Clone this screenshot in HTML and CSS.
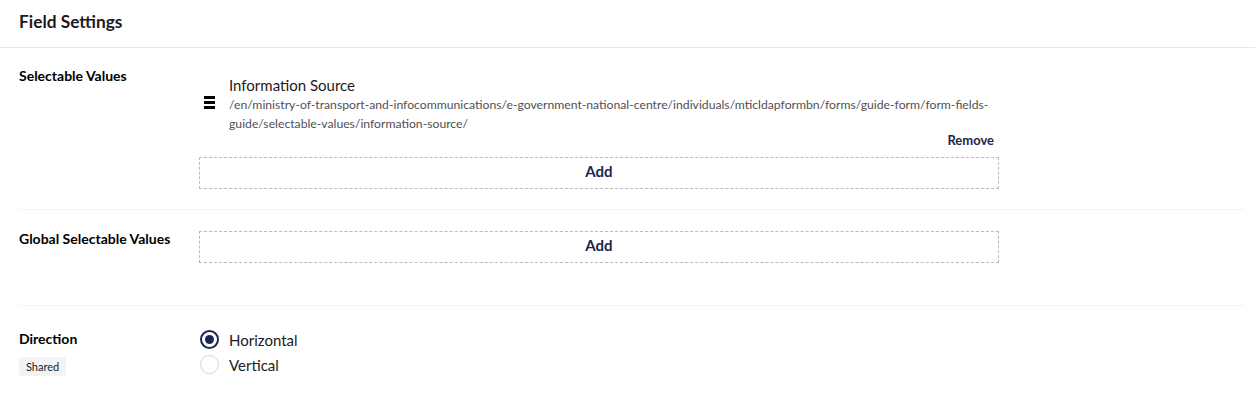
FILE: index.html
```html
<!DOCTYPE html>
<html lang="en">
<head>
<meta charset="utf-8">
<title>Field Settings</title>
<link rel="stylesheet" href="styles.css">
</head>
<body>
<div class="panel">
  <header class="panel-header">
    <h2 class="panel-title">Field Settings</h2>
  </header>
  <div class="panel-body">
    <div class="prop prop-first">
      <div class="prop-label">
        <span class="label-text">Selectable Values</span>
      </div>
      <div class="prop-editor">
        <div class="picked-item">
          <span class="drag-handle" aria-hidden="true">
            <svg width="11" height="15" viewBox="0 0 11 15"><rect x="0" y="1" width="11" height="3" fill="#000"/><rect x="0" y="6" width="11" height="3" fill="#000"/><rect x="0" y="11" width="11" height="3" fill="#000"/></svg>
          </span>
          <div class="picked-info">
            <div class="picked-name">Information Source</div>
            <div class="picked-path">/en/ministry-of-transport-and-infocommunications/e-government-national-centre/individuals/mticldapformbn/forms/guide-form/form-fields-guide/selectable-values/information-source/</div>
          </div>
        </div>
        <div class="remove-row"><button class="link-btn">Remove</button></div>
        <button class="add-btn">Add</button>
      </div>
    </div>
    <div class="prop prop-second">
      <div class="prop-label">
        <span class="label-text">Global Selectable Values</span>
      </div>
      <div class="prop-editor editor-tight">
        <button class="add-btn">Add</button>
      </div>
    </div>
    <div class="prop prop-third">
      <div class="prop-label label-pad">
        <span class="label-text">Direction</span>
        <span class="badge">Shared</span>
      </div>
      <div class="prop-editor editor-none">
        <label class="radio">
          <span class="radio-circle checked"></span>
          <span class="radio-text">Horizontal</span>
        </label>
        <label class="radio">
          <span class="radio-circle"></span>
          <span class="radio-text">Vertical</span>
        </label>
      </div>
    </div>
  </div>
</div>
</body>
</html>
```
FILE: styles.css
```css
* { box-sizing: border-box; }
html, body { margin: 0; padding: 0; background: #fff; }
body {
  font-family: Lato, "Open Sans", "Liberation Sans", sans-serif;
  color: #1b1b1b;
  width: 1255px;
  height: 407px;
  overflow: hidden;
}
.panel-header {
  height: 48px;
  border-bottom: 1px solid #e9e9eb;
  padding: 0 19px;
  display: flex;
  align-items: center;
}
.panel-title {
  margin: 0;
  font-size: 17.3px;
  font-weight: 700;
  line-height: 20px;
  padding-bottom: 4px;
  color: #1b1b1b;
}
.panel-body {
  padding: 0 11px 0 19px;
}
.prop {
  display: flex;
  border-bottom: 1px solid #f3f3f5;
}
.prop-first { padding: 18px 0 20px; }
.prop-second { padding: 19px 0 42px; }
.prop-third { padding: 21px 0 0; border-bottom: none; }
.prop-label {
  width: 180px;
  flex: none;
  display: flex;
  flex-direction: column;
  align-items: flex-start;
}
.label-pad { padding-top: 2px; }
.label-text {
  font-size: 14px;
  font-weight: 700;
  line-height: 20px;
  color: #000;
}
.badge {
  margin-top: 8px;
  background: #f3f3f5;
  border-radius: 3px;
  font-size: 11px;
  line-height: 19px;
  padding: 0 7px;
  color: #1b1b1b;
}
.prop-editor {
  width: 800px;
  padding-top: 9px;
}
.editor-tight { padding-top: 2px; }
.editor-none { padding-top: 0; }
.picked-item {
  display: flex;
  align-items: center;
  padding-left: 5px;
}
.drag-handle {
  width: 11px;
  flex: none;
  display: flex;
  margin-right: 14px;
  margin-top: -4px;
}
.picked-info { flex: 1; }
.picked-name {
  font-size: 15px;
  line-height: 20px;
  color: #1b1b1b;
}
.picked-path {
  font-size: 12.2px;
  line-height: 19px;
  color: #515054;
}
.remove-row {
  display: flex;
  justify-content: flex-end;
  padding-right: 5px;
  margin-top: -1px;
}
.link-btn {
  border: none;
  background: none;
  padding: 0;
  font-family: inherit;
  font-size: 13px;
  font-weight: 700;
  line-height: 16px;
  color: #1b264f;
}
.add-btn {
  display: block;
  width: 800px;
  height: 32px;
  margin-top: 9px;
  border: 1px dashed #bbbbbb;
  background: #fff;
  font-family: inherit;
  font-size: 15px;
  font-weight: 700;
  color: #1b264f;
  padding: 0 0 4px;
}
.editor-tight .add-btn { margin-top: 0; }
.radio {
  display: flex;
  align-items: center;
  height: 25px;
  padding-left: 1px;
}
.radio-circle {
  width: 19px;
  height: 19px;
  border-radius: 50%;
  border: 1px solid #d8d7d9;
  margin-right: 10px;
  display: flex;
  align-items: center;
  justify-content: center;
  flex: none;
}
.radio-circle.checked {
  border: 2px solid #1b264f;
}
.radio-circle.checked::after {
  content: "";
  width: 9px;
  height: 9px;
  border-radius: 50%;
  background: #1b264f;
}
.radio-text {
  font-size: 15px;
  line-height: 20px;
  color: #1b1b1b;
}
```
